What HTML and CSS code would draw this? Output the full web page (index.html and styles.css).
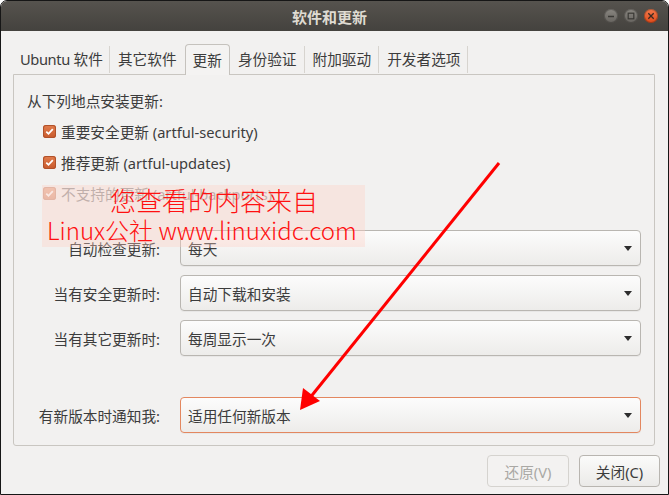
FILE: index.html
```html
<!DOCTYPE html>
<html lang="zh-CN">
<head>
<meta charset="utf-8">
<title>软件和更新</title>
<link rel="stylesheet" href="styles.css">
</head>
<body>
<div class="window">
  <header class="titlebar">
    <span class="title">软件和更新</span>
    <div class="wm-buttons">
      <span class="wm wm-min"><svg width="14" height="14" viewBox="0 0 14 14"><path d="M4 7.5h6" stroke="#3a3935" stroke-width="1.4"/></svg></span>
      <span class="wm wm-max"><svg width="14" height="14" viewBox="0 0 14 14"><rect x="4.2" y="4.2" width="5.6" height="5.6" fill="none" stroke="#3a3935" stroke-width="1.2"/></svg></span>
      <span class="wm wm-close"><svg width="14" height="14" viewBox="0 0 14 14"><path d="M4.3 4.3l5.4 5.4M9.7 4.3l-5.4 5.4" stroke="#3a2a22" stroke-width="1.3"/></svg></span>
    </div>
  </header>
  <main class="content">
    <nav class="tabs">
      <span class="tab"><span class="latin">Ubuntu</span>&nbsp;软件</span>
      <span class="tab pre-active">其它软件</span>
      <span class="tab active">更新</span>
      <span class="tab">身份验证</span>
      <span class="tab">附加驱动</span>
      <span class="tab">开发者选项</span>
    </nav>
    <section class="frame">
      <div class="heading">从下列地点安装更新:</div>
      <div class="check-row"><span class="checkbox"><svg width="13" height="13" viewBox="0 0 13 13"><path d="M3.3 6.6l2.2 2.2 4.3-4.6" fill="none" stroke="#fff" stroke-width="1.8"/></svg></span><span>重要安全更新 (artful-security)</span></div>
      <div class="check-row"><span class="checkbox"><svg width="13" height="13" viewBox="0 0 13 13"><path d="M3.3 6.6l2.2 2.2 4.3-4.6" fill="none" stroke="#fff" stroke-width="1.8"/></svg></span><span>推荐更新 (artful-updates)</span></div>
      <div class="check-row disabled"><span class="checkbox"><svg width="13" height="13" viewBox="0 0 13 13"><path d="M3.3 6.6l2.2 2.2 4.3-4.6" fill="none" stroke="#fff" stroke-width="1.8"/></svg></span><span>不支持的更新 (artful-backports)</span></div>
      <div class="combos">
        <div class="combo-row"><span class="combo-label">自动检查更新:</span><div class="combo"><span>每天</span><span class="caret"></span></div></div>
        <div class="combo-row"><span class="combo-label">当有安全更新时:</span><div class="combo"><span>自动下载和安装</span><span class="caret"></span></div></div>
        <div class="combo-row"><span class="combo-label">当有其它更新时:</span><div class="combo"><span>每周显示一次</span><span class="caret"></span></div></div>
        <div class="combo-row last"><span class="combo-label">有新版本时通知我:</span><div class="combo focused"><span>适用任何新版本</span><span class="caret"></span></div></div>
      </div>
    </section>
    <footer class="actions">
      <button class="btn" disabled>还原(V)</button>
      <button class="btn">关闭(C)</button>
    </footer>
  </main>
  <div class="watermark">
    <div class="wm-line1">您查看的内容来自</div>
    <div class="wm-line2">Linux公社 www.linuxidc.com</div>
  </div>
  <svg class="arrow" width="669" height="495" viewBox="0 0 669 495">
    <line x1="499" y1="163" x2="309" y2="399" stroke="#ff0000" stroke-width="3"/>
    <polygon points="300,410 303,388 320,401" fill="#ff0000"/>
  </svg>
</div>
</body>
</html>
```
FILE: styles.css
```css
* { box-sizing: border-box; }
html, body { margin: 0; padding: 0; }
body {
  width: 669px;
  height: 495px;
  background: #ffffff;
  font-family: "Noto Sans", "Noto Sans CJK SC", sans-serif;
  font-size: 14.67px;
  color: #3c3c3c;
  overflow: hidden;
}
.window {
  position: relative;
  width: 669px;
  height: 495px;
  display: flex;
  flex-direction: column;
  background: #f2f1f0;
  border: 1px solid #161616;
  border-radius: 7px 7px 0 0;
  overflow: hidden;
}
.titlebar {
  height: 30px;
  flex: none;
  display: grid;
  grid-template-columns: 1fr auto 1fr;
  align-items: center;
  background: linear-gradient(#56534e, #44423e);
  padding-right: 10px;
}
.title {
  grid-column: 2;
  color: #dfdbd2;
  font-weight: bold;
  font-size: 15px;
  font-family: "Noto Sans CJK SC", sans-serif;
}
.wm-buttons {
  grid-column: 3;
  justify-self: end;
  display: flex;
  gap: 6px;
}
.wm {
  width: 14px;
  height: 14px;
  border-radius: 50%;
  display: flex;
  background: linear-gradient(#8a8781, #66635e);
  box-shadow: inset 0 0 0 1px rgba(0,0,0,0.25);
}
.wm-close {
  background: linear-gradient(#f47a4c, #de4a1a);
}
.content {
  flex: 1;
  display: flex;
  flex-direction: column;
  padding: 13px 13px 7px 12px;
}
.tabs {
  display: flex;
  height: 31px;
  margin-bottom: -1px;
}
.tab {
  display: flex;
  align-items: center;
  padding: 0 8px 2px;
  position: relative;
  white-space: nowrap;
}
.tab:first-child { padding: 0 7px 2px 7px; }
.latin { letter-spacing: -0.4px; }
.tab::after {
  content: "";
  position: absolute;
  right: 0;
  top: 2px;
  bottom: 2px;
  width: 1px;
  background: #d7d4cf;
}
.tab.pre-active::after { display: none; }
.tab.active {
  background: #f4f3f2;
  border: 1px solid #c5c2bd;
  border-bottom: none;
  border-radius: 4px 4px 0 0;
  z-index: 1;
  padding: 0 7px 2px;
}
.tab.active::after { display: none; }
.frame {
  height: 372px;
  flex: none;
  border: 1px solid #c9c6c1;
  border-radius: 0 0 3px 3px;
  padding: 10px 13px 12px 13px;
  display: flex;
  flex-direction: column;
}
.heading {
  height: 31px;
  display: flex;
  align-items: center;
}
.check-row {
  height: 31px;
  display: flex;
  align-items: center;
  gap: 5px;
  padding-left: 16px;
}
.checkbox {
  width: 13px;
  height: 13px;
  border-radius: 3px;
  background: linear-gradient(#e27d4d, #c85a2d);
  box-shadow: inset 0 0 0 1px #b0512a;
  display: flex;
}
.check-row.disabled { opacity: 0.45; }
.combos {
  margin-top: 21px;
  display: flex;
  flex-direction: column;
  gap: 9px;
}
.combo-row {
  height: 36px;
  display: flex;
  align-items: center;
  gap: 15px;
}
.combo-row.last { margin-top: 32px; }
.combo-label {
  width: 138px;
  text-align: right;
  flex: none;
  white-space: nowrap;
  padding-right: 5px;
}
.combo {
  flex: 1;
  height: 36px;
  display: flex;
  align-items: center;
  justify-content: space-between;
  padding: 0 8px 0 7px;
  border: 1px solid #b9b6b1;
  border-radius: 4px;
  background: linear-gradient(#fcfcfc, #edecea);
  box-shadow: 0 1px 0 rgba(0,0,0,0.04);
}
.combo.focused { border-color: #e3875f; }
.caret {
  width: 0;
  height: 0;
  border-left: 4px solid transparent;
  border-right: 4px solid transparent;
  border-top: 5px solid #2d2d2d;
}
.actions {
  margin-top: 9px;
  margin-right: -5px;
  display: flex;
  justify-content: flex-end;
  gap: 10px;
}
.btn {
  height: 32px;
  width: 82px;
  font-family: "Noto Sans", "Noto Sans CJK SC", sans-serif;
  font-size: 14.67px;
  color: #3c3c3c;
  border: 1px solid #b8b5b0;
  border-radius: 4px;
  background: linear-gradient(#fbfbfa, #ebeae8);
  padding: 0;
}
.btn + .btn { width: 81px; }
.btn:disabled {
  color: #a9a8a4;
  border-color: #d5d3cf;
  background: #f3f2f1;
}
.watermark {
  position: absolute;
  left: 41px;
  top: 184px;
  width: 323px;
  height: 62px;
  background: rgba(255, 205, 195, 0.35);
  color: #ff1010;
  font-family: "Noto Sans CJK SC", sans-serif;
  font-weight: 300;
  line-height: 30px;
  z-index: 2;
}
.wm-line1 {
  font-size: 26px;
  padding-left: 68px;
}
.wm-line2 {
  font-size: 24px;
  padding-left: 5px;
  white-space: nowrap;
}
.arrow {
  position: absolute;
  left: -1px;
  top: -1px;
  z-index: 3;
  pointer-events: none;
}
```
